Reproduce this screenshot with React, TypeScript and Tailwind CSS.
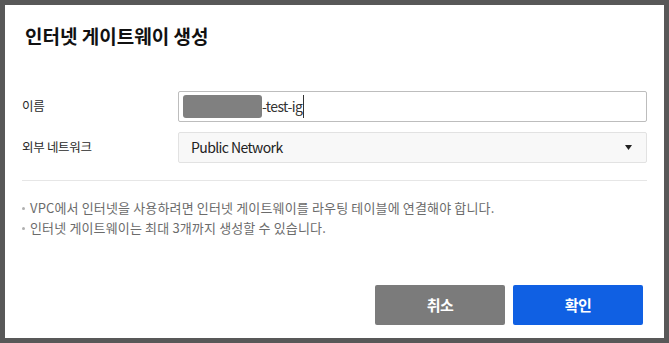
import React from 'react';

const font = { fontFamily: '"Noto Sans CJK KR", "Noto Sans", sans-serif' };

export default function App() {
  return (
    <div className="w-[669px] h-[343px] bg-[#585858] p-[5px]" style={font}>
      <div className="w-full h-full bg-white flex flex-col px-[17px] pt-[18px] pb-[13px]">
        {/* Title */}
        <h2 className="ml-[3px] text-[19px] leading-[26px] font-bold text-[#111]">
          인터넷 게이트웨이 생성
        </h2>

        {/* Form */}
        <div className="mt-[42px] grid grid-cols-[156px_1fr] gap-y-[10px] items-center">
          <label className="text-[12.5px] tracking-[-0.3px] text-[#2a2a2a]">이름</label>
          <div className="h-[31px] border border-[#bdbdbd] rounded-[2px] flex items-center pl-[4px]">
            <span className="w-[79px] h-[23px] rounded-[3px] bg-[#808080]" />
            <span className="text-[14px] text-[#333] tracking-[-0.6px]">-test-ig</span>
            <span className="ml-[1px] w-px h-[23px] bg-[#333]" />
          </div>

          <label className="text-[12.5px] tracking-[-0.3px] text-[#2a2a2a]">외부 네트워크</label>
          <div className="h-[31px] border border-[#e2e2e2] bg-[#f8f8f8] rounded-[2px] flex items-center justify-between pl-[12px] pr-[14px]">
            <span className="text-[14px] text-[#222] tracking-[-0.6px]">Public Network</span>
            <svg width="7" height="5" viewBox="0 0 7 5">
              <path d="M0 0h7L3.5 5z" fill="#222" />
            </svg>
          </div>
        </div>

        <div className="mt-[17px] h-px bg-[#e6e6e6]" />

        {/* Notes */}
        <ul className="mt-[17px] text-[13px] leading-[20px] tracking-[0.15px] text-[#6b6b6b]">
          <li className="flex items-center">
            <span className="w-[3px] h-[3px] bg-[#b0b0b0] rounded-full mr-[5px]" />
            VPC에서 인터넷을 사용하려면 인터넷 게이트웨이를 라우팅 테이블에 연결해야 합니다.
          </li>
          <li className="flex items-center">
            <span className="w-[3px] h-[3px] bg-[#b0b0b0] rounded-full mr-[5px]" />
            인터넷 게이트웨이는 최대 3개까지 생성할 수 있습니다.
          </li>
        </ul>

        {/* Buttons */}
        <div className="mt-auto flex justify-end gap-[8px] pr-[4px]">
          <button className="w-[130px] h-[40px] rounded-[2px] bg-[#7b7b7b] text-white text-[15px] font-bold tracking-[-0.5px]">
            취소
          </button>
          <button className="w-[130px] h-[40px] rounded-[2px] bg-[#1060e3] text-white text-[15px] font-bold tracking-[-0.5px]">
            확인
          </button>
        </div>
      </div>
    </div>
  );
}
